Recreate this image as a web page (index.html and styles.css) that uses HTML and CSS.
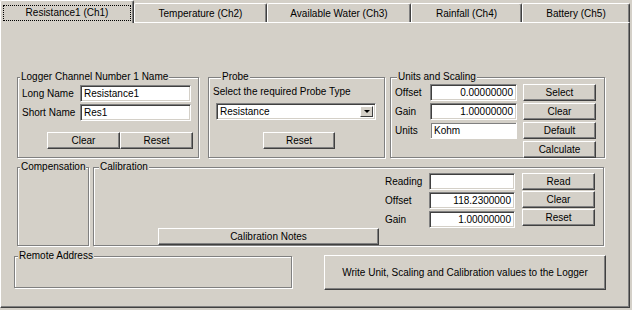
FILE: index.html
```html
<!DOCTYPE html>
<html lang="en">
<head>
    <meta charset="UTF-8">
    <title>Channel Settings</title>
    <link rel="stylesheet" href="styles.css">
</head>
<body>
    <div class="window">
        <div class="tabs">
            <div class="tab tab-active"><span class="focus">Resistance1 (Ch1)</span></div>
            <div class="tab tab-2">Temperature (Ch2)</div>
            <div class="tab tab-3">Available Water (Ch3)</div>
            <div class="tab tab-4">Rainfall (Ch4)</div>
            <div class="tab tab-5">Battery (Ch5)</div>
        </div>

        <div class="panel">
            <!-- name / probe / scaling -->
            <div class="row row-top">
                <div class="group name-group">
                    <span class="legend">Logger Channel Number 1 Name</span>
                    <div class="name-grid">
                        <span class="label">Long Name</span>
                        <div class="input">Resistance1</div>
                        <span class="label">Short Name</span>
                        <div class="input">Res1</div>
                    </div>
                    <div class="btn-row name-btns">
                        <div class="btn">Clear</div>
                        <div class="btn">Reset</div>
                    </div>
                </div>

                <div class="group probe-group">
                    <span class="legend">Probe</span>
                    <div class="probe-text">Select the required Probe Type</div>
                    <div class="select">
                        <span class="select-value">Resistance</span>
                        <span class="drop"></span>
                    </div>
                    <div class="btn probe-reset">Reset</div>
                </div>

                <div class="group units-group">
                    <span class="legend">Units and Scaling</span>
                    <div class="units-fields">
                        <span class="label">Offset</span>
                        <div class="input num">0.00000000</div>
                        <span class="label">Gain</span>
                        <div class="input num">1.00000000</div>
                        <span class="label">Units</span>
                        <div class="input plain">Kohm</div>
                    </div>
                    <div class="units-btns">
                        <div class="btn">Select</div>
                        <div class="btn">Clear</div>
                        <div class="btn">Default</div>
                        <div class="btn">Calculate</div>
                    </div>
                </div>
            </div>

            <!-- compensation / calibration -->
            <div class="row row-mid">
                <div class="group comp-group">
                    <span class="legend">Compensation</span>
                </div>
                <div class="group cal-group">
                    <span class="legend">Calibration</span>
                    <div class="cal-block">
                        <div class="cal-fields">
                            <span class="label">Reading</span>
                            <div class="input"></div>
                            <span class="label">Offset</span>
                            <div class="input num">118.2300000</div>
                            <span class="label">Gain</span>
                            <div class="input num">1.00000000</div>
                        </div>
                        <div class="cal-btns">
                            <div class="btn">Read</div>
                            <div class="btn">Clear</div>
                            <div class="btn">Reset</div>
                        </div>
                    </div>
                    <div class="btn notes-btn">Calibration Notes</div>
                </div>
            </div>

            <!-- remote / write -->
            <div class="row row-bottom">
                <div class="group remote-group">
                    <span class="legend">Remote Address</span>
                </div>
                <div class="btn write-btn">Write Unit, Scaling and Calibration values to the Logger</div>
            </div>
        </div>
    </div>
</body>
</html>
```

FILE: styles.css
```css
* {
    margin: 0;
    padding: 0;
    box-sizing: border-box;
}

body {
    background: #d4d0c8;
    font-family: "Liberation Sans", Arial, sans-serif;
    font-size: 10px;
    color: #000;
    overflow: hidden;
}

.window {
    width: 632px;
    height: 310px;
}

/* tabs */

.tabs {
    display: flex;
    height: 22px;
    align-items: flex-end;
}

.tab {
    height: 19px;
    border-top: 1px solid #fff;
    border-left: 1px solid #fff;
    border-right: 1px solid #404040;
    border-radius: 2px 2px 0 0;
    box-shadow: inset -1px 0 0 #808080;
    display: flex;
    justify-content: center;
    padding-top: 4px;
    line-height: 12px;
    white-space: nowrap;
}

.tab-active {
    width: 134px;
    height: 23px;
    margin-bottom: -1px;
    position: relative;
    z-index: 1;
    background: #d4d0c8;
    padding-top: 4px;
}

.focus {
    width: 128px;
    height: 16px;
    border: 1px dotted #000;
    text-align: center;
    line-height: 13px;
}

.tab-2 { width: 133px; }
.tab-3 { width: 144px; }
.tab-4 { width: 111px; }
.tab-5 { width: 108px; }

/* panel */

.panel {
    width: 630px;
    height: 286px;
    border-top: 1px solid #fff;
    border-left: 1px solid #fff;
    border-right: 1px solid #404040;
    border-bottom: 1px solid #404040;
    box-shadow: inset -1px -1px 0 #808080;
    padding-top: 54px;
}

.row {
    display: flex;
    align-items: flex-start;
}

.row-top {
    margin-left: 16px;
}

.row-mid {
    margin-left: 16px;
    margin-top: 9px;
    gap: 4px;
}

.row-bottom {
    margin-left: 13px;
    margin-top: 9px;
    gap: 32px;
}

/* group boxes */

.group {
    position: relative;
    border: 1px solid #808080;
    box-shadow: 1px 1px 0 #fff, inset 1px 1px 0 #fff;
}

.legend {
    position: absolute;
    top: -7px;
    left: 2px;
    padding: 0 1px;
    background: #d4d0c8;
    line-height: 12px;
    white-space: nowrap;
}

.label {
    line-height: 12px;
    white-space: nowrap;
}

/* inputs and buttons */

.input {
    height: 17px;
    background: #fff;
    border: 1px solid;
    border-color: #808080 #fff #fff #808080;
    box-shadow: inset 1px 1px 0 #404040, inset -1px -1px 0 #d4d0c8;
    padding: 0 3px;
    line-height: 15px;
    white-space: nowrap;
    overflow: hidden;
}

.input.num {
    text-align: right;
    padding-right: 3px;
}

.input.plain {
    border-color: #d4d0c8 #fff #fff #d4d0c8;
    box-shadow: inset 1px 1px 0 #808080;
}

.btn {
    height: 17px;
    border: 1px solid;
    border-color: #fff #404040 #404040 #fff;
    box-shadow: inset -1px -1px 0 #808080;
    display: flex;
    align-items: center;
    justify-content: center;
    white-space: nowrap;
    background: #d4d0c8;
}

/* logger name */

.name-group {
    width: 182px;
    height: 81px;
    padding: 7px 0 0 4px;
}

.name-grid {
    display: grid;
    grid-template-columns: 58px 111px;
    grid-auto-rows: 17px;
    row-gap: 2px;
    align-items: center;
}

.btn-row {
    display: flex;
}

.name-btns {
    margin: 11px 0 0 25px;
}

.name-btns .btn {
    width: 73px;
}

/* probe */

.probe-group {
    width: 177px;
    height: 81px;
    margin-left: 9px;
    padding: 8px 0 0 4px;
}

.probe-group .legend {
    left: 12px;
}

.probe-text {
    line-height: 12px;
}

.select {
    display: flex;
    width: 160px;
    height: 17px;
    margin: 5px 0 0 3px;
    background: #fff;
    border: 1px solid;
    border-color: #808080 #fff #fff #808080;
    box-shadow: inset 1px 1px 0 #404040, inset -1px -1px 0 #d4d0c8;
    padding: 2px;
}

.select-value {
    flex: 1;
    padding-left: 1px;
    line-height: 11px;
}

.drop {
    width: 13px;
    height: 11px;
    border: 1px solid;
    border-color: #fff #404040 #404040 #fff;
    background: #d4d0c8;
    display: flex;
    align-items: center;
    justify-content: center;
}

.drop::after {
    content: "";
    border-left: 3px solid transparent;
    border-right: 3px solid transparent;
    border-top: 3px solid #000;
}

.probe-reset {
    width: 72px;
    margin: 12px 0 0 50px;
}

/* units and scaling */

.units-group {
    width: 215px;
    height: 81px;
    margin-left: 5px;
    padding: 6px 0 0 4px;
    display: flex;
    align-items: flex-start;
    gap: 6px;
}

.units-group .legend {
    left: 6px;
}

.units-fields {
    display: grid;
    grid-template-columns: 35px 87px;
    grid-auto-rows: 17px;
    row-gap: 2px;
    align-items: center;
}

.units-btns {
    display: flex;
    flex-direction: column;
    gap: 2px;
}

.units-btns .btn {
    width: 73px;
}

/* compensation / calibration */

.comp-group {
    width: 72px;
    height: 79px;
}

.cal-group {
    width: 511px;
    height: 79px;
    padding-top: 5px;
}

.cal-group .legend {
    left: 5px;
}

.cal-block {
    display: flex;
    align-items: flex-start;
    gap: 7px;
    margin-left: 291px;
}

.cal-fields {
    display: grid;
    grid-template-columns: 44px 86px;
    grid-auto-rows: 17px;
    row-gap: 2px;
    align-items: center;
}

.cal-btns {
    display: flex;
    flex-direction: column;
    gap: 1px;
}

.cal-btns .btn {
    width: 73px;
}

.notes-btn {
    width: 221px;
    margin-left: 64px;
}

/* remote / write */

.remote-group {
    width: 278px;
    height: 32px;
    margin-top: 1px;
}

.remote-group .legend {
    left: 3px;
}

.write-btn {
    width: 282px;
    height: 35px;
}
```
